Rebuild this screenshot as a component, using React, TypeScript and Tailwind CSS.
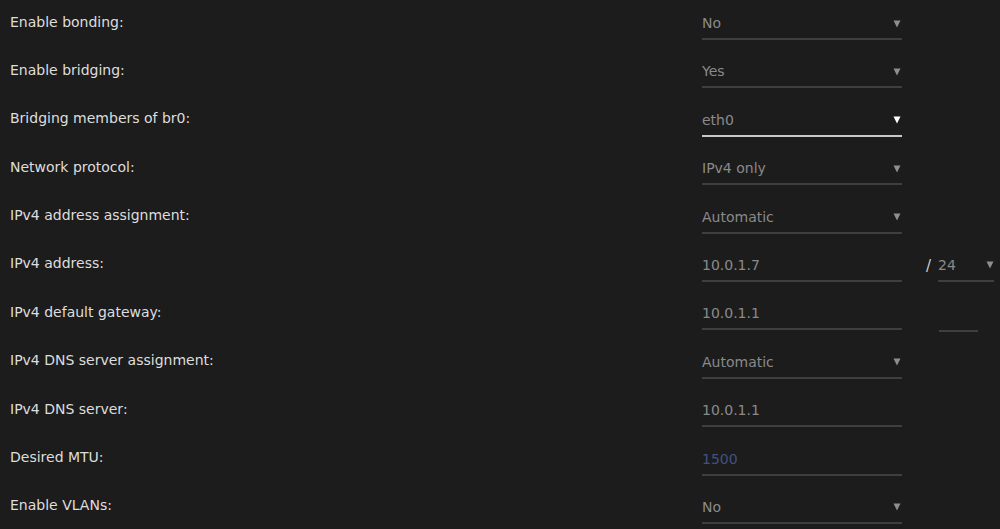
import React from 'react';

type Row = {
  label: string;
  value: string;
  select?: boolean;
  focused?: boolean;
  placeholder?: boolean;
  extra?: 'prefix' | 'blank';
};

const rows: Row[] = [
  { label: 'Enable bonding:', value: 'No', select: true },
  { label: 'Enable bridging:', value: 'Yes', select: true },
  { label: 'Bridging members of br0:', value: 'eth0', select: true, focused: true },
  { label: 'Network protocol:', value: 'IPv4 only', select: true },
  { label: 'IPv4 address assignment:', value: 'Automatic', select: true },
  { label: 'IPv4 address:', value: '10.0.1.7', extra: 'prefix' },
  { label: 'IPv4 default gateway:', value: '10.0.1.1', extra: 'blank' },
  { label: 'IPv4 DNS server assignment:', value: 'Automatic', select: true },
  { label: 'IPv4 DNS server:', value: '10.0.1.1' },
  { label: 'Desired MTU:', value: '1500', placeholder: true },
  { label: 'Enable VLANs:', value: 'No', select: true },
];

function Arrow({ light }: { light?: boolean }) {
  return (
    <svg width="8" height="8" viewBox="0 0 8 8" className="shrink-0">
      <path d="M0.5 0.5 H7.5 L4 7.5 Z" fill={light ? '#ffffff' : '#8e8e8e'} />
    </svg>
  );
}

function Field({ row }: { row: Row }) {
  const color = row.placeholder ? 'text-[#435081]' : 'text-[#8a8a8a]';
  return (
    <div
      className={`w-[200px] h-[31px] flex items-center justify-between pr-[1px] border-b-2 ${
        row.focused ? 'border-[#c8c8c8]' : 'border-[#3f3f3f]'
      }`}
    >
      <span className={color}>{row.value}</span>
      {row.select && <Arrow light={row.focused} />}
    </div>
  );
}

export default function App() {
  return (
    <div
      className="w-[1000px] h-[529px] overflow-hidden bg-[#1c1c1c] text-[14px]"
      style={{ fontFamily: '"DejaVu Sans", sans-serif' }}
    >
      {rows.map((row) => (
        <div key={row.label} className="h-[48.4px] flex items-start pt-[9px] pl-[10px]">
          <div className="flex-1 h-[26px] flex items-center text-[#dedede]">{row.label}</div>
          <Field row={row} />
          <div className="w-[98px] h-[31px] flex items-end">
            {row.extra === 'prefix' && (
              <div className="flex items-center h-full pl-[24px]">
                <span className="text-[#d0d0d0] mr-[7px] text-[15px]">/</span>
                <div className="w-[56px] h-full flex items-center justify-between border-b-2 border-[#3f3f3f]">
                  <span className="text-[#8a8a8a]">24</span>
                  <Arrow />
                </div>
              </div>
            )}
            {row.extra === 'blank' && (
              <div className="ml-[37px] mb-[-2px] w-[39px] border-b-2 border-[#3f3f3f]" />
            )}
          </div>
        </div>
      ))}
    </div>
  );
}
